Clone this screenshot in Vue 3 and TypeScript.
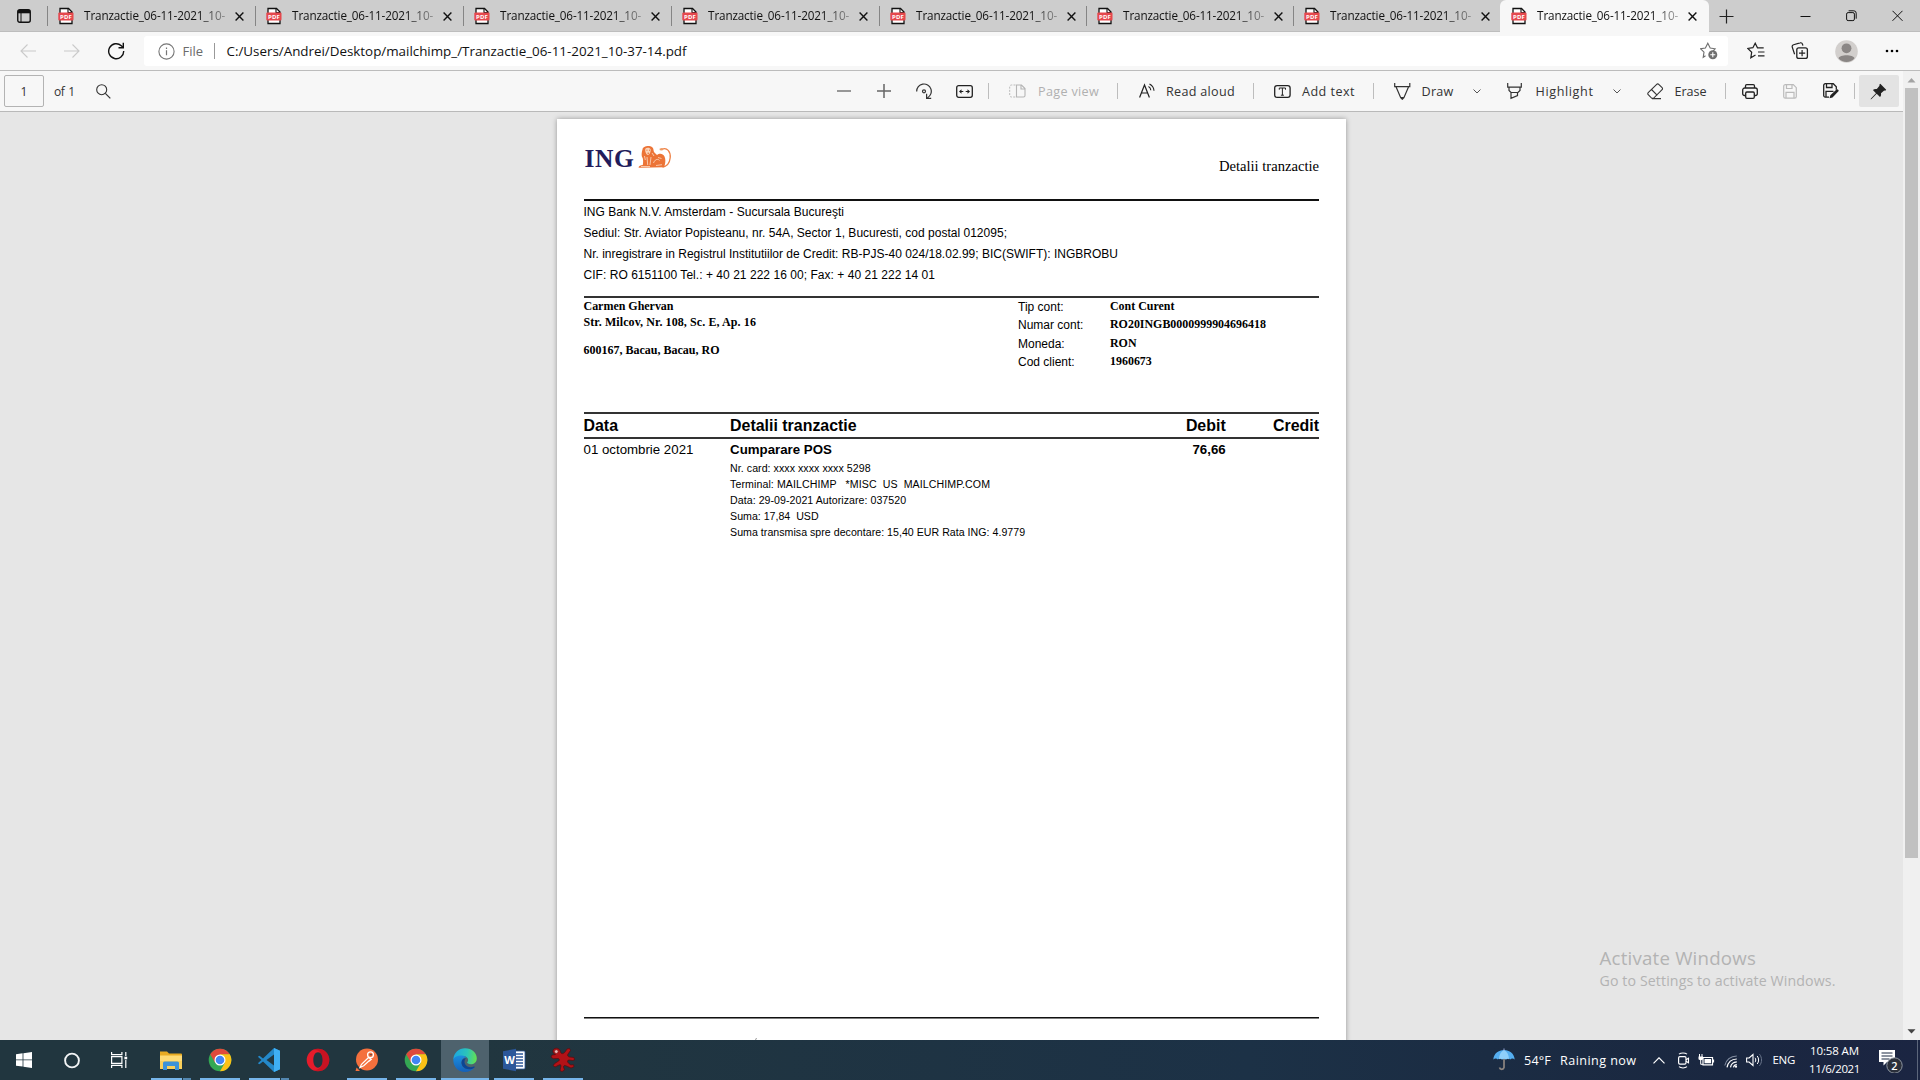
<script setup lang="ts">
import type { Directive } from 'vue'

interface Tab {
  title: string
  active: boolean
}

const tabs: Tab[] = Array.from({ length: 8 }, (_, i) => ({
  title: 'Tranzactie_06-11-2021_10-',
  active: i === 7,
}))

interface Line {
  text: string
  width: number
}

const bankLines: Line[] = [
  { text: 'ING Bank N.V. Amsterdam - Sucursala Bucureşti', width: 260.5 },
  { text: 'Sediul: Str. Aviator Popisteanu, nr. 54A, Sector 1, Bucuresti, cod postal 012095;', width: 423.5 },
  { text: 'Nr. inregistrare in Registrul Institutiilor de Credit: RB-PJS-40 024/18.02.99; BIC(SWIFT): INGBROBU', width: 534.5 },
  { text: 'CIF: RO 6151100 Tel.: + 40 21 222 16 00; Fax: + 40 21 222 14 01', width: 351.5 },
]

const account: [string, string][] = [
  ['Tip cont:', 'Cont Curent'],
  ['Numar cont:', 'RO20INGB0000999904696418'],
  ['Moneda:', 'RON'],
  ['Cod client:', '1960673'],
]

const details: Line[] = [
  { text: 'Nr. card: xxxx xxxx xxxx 5298', width: 140.5 },
  { text: 'Terminal: MAILCHIMP   *MISC  US  MAILCHIMP.COM', width: 260 },
  { text: 'Data: 29-09-2021 Autorizare: 037520', width: 176 },
  { text: 'Suma: 17,84  USD', width: 88.5 },
  { text: 'Suma transmisa spre decontare: 15,40 EUR Rata ING: 4.9779', width: 295 },
]

interface App {
  name: string
  running: boolean
  stacked?: boolean
  current?: boolean
}

const apps: App[] = [
  { name: 'explorer', running: true, stacked: true },
  { name: 'chrome', running: true },
  { name: 'code', running: true, stacked: true },
  { name: 'opera', running: false },
  { name: 'postman', running: true },
  { name: 'chrome', running: true },
  { name: 'edge', running: true, current: true },
  { name: 'word', running: true },
  { name: 'gecko', running: true },
]

// Spreads a label over the given number of pixels by adjusting its tracking.
const vFit: Directive<HTMLElement, number> = {
  mounted(el, { value }) {
    const natural = el.getBoundingClientRect().width
    const count = (el.textContent ?? '').length
    if (count > 0) el.style.letterSpacing = `${(value - natural) / count}px`
  },
}
</script>

<template>
  <div class="screen">
    <header class="strip">
      <div class="tab-menu">
        <svg width="14" height="14" viewBox="0 0 14 14"><rect x=".75" y=".75" width="12.5" height="12.5" rx="2" fill="none" stroke="#111" stroke-width="1.4" /><path d="M1 1h12v3.3H1z" fill="#111" /><path d="M4 4v9" stroke="#111" stroke-width="1" /></svg>
      </div>
      <div v-for="(t, i) in tabs" :key="i" class="tab" :class="{ active: t.active }">
        <svg class="pdf" width="16" height="18" viewBox="0 0 16 18">
          <path d="M2 1.500h8.500L14 5v11.500H2z" fill="#fff" stroke="#111" stroke-width="1.300" />
          <path d="M10 1.500V5.500h4" fill="none" stroke="#111" stroke-width="1.100" />
          <rect x=".3" y="5.500" width="15.200" height="8" rx="1" fill="#e5484d" />
          <text x="7.900" y="11.700" text-anchor="middle" textLength="12" font-family="Open Sans, sans-serif" font-weight="700" font-size="6" fill="#fff">PDF</text>
        </svg>
        <span class="title"><span v-fit="141">{{ t.title }}</span></span>
        <svg class="x" width="9" height="9" viewBox="0 0 9 9"><path d="M.6.6l7.800 7.800M8.400.6L.6 8.400" stroke="#111" stroke-width="1.400" /></svg>
      </div>
      <svg class="new-tab" width="15" height="15" viewBox="0 0 15 15"><path d="M7.500 .5v14M.5 7.500h14" stroke="#222" stroke-width="1.200" /></svg>
      <div class="window-controls">
        <svg width="11" height="12" viewBox="0 0 11 12"><path d="M.5 6.500h10" stroke="#111" /></svg>
        <svg width="11" height="12" viewBox="0 0 11 12"><rect x=".6" y="2.600" width="7.800" height="8" rx="1.500" fill="none" stroke="#111" /><path d="M2.600 .8h5.200a2.400 2.400 0 0 1 2.400 2.400v5.500" fill="none" stroke="#111" /></svg>
        <svg width="11" height="12" viewBox="0 0 11 12"><path d="M.5.8l10 10M10.500.8l-10 10" stroke="#111" /></svg>
      </div>
    </header>

    <div class="nav">
      <svg class="back" width="16" height="14" viewBox="0 0 16 14"><path d="M16 7H1M7.500.5L1 7l6.500 6.500" fill="none" stroke="#cacaca" stroke-width="1.100" /></svg>
      <svg class="forward" width="16" height="14" viewBox="0 0 16 14"><path d="M0 7h15M8.500.5L15 7l-6.500 6.500" fill="none" stroke="#cacaca" stroke-width="1.100" /></svg>
      <svg class="reload" width="18" height="18" viewBox="0 0 18 18"><path d="M16.700 9A7.500 7.500 0 1 1 14.300 3.700L16 5.300" fill="none" stroke="#111" stroke-width="1.400" /><path d="M16.300.8V5.700H11.500" fill="none" stroke="#111" stroke-width="1.400" /></svg>
      <div class="address">
        <svg class="info" width="17" height="17" viewBox="0 0 17 17"><circle cx="8.500" cy="8.500" r="7.600" fill="none" stroke="#767676" stroke-width="1.100" /><path d="M8.500 7.300v5M8.500 4.500v1.400" stroke="#767676" stroke-width="1.200" /></svg>
        <span class="file"><span v-fit="20.500">File</span></span>
        <i class="bar"></i>
        <span class="url"><span v-fit="460">C:/Users/Andrei/Desktop/mailchimp_/Tranzactie_06-11-2021_10-37-14.pdf</span></span>
        <svg class="add-star" width="18" height="18" viewBox="0 0 18 18"><path d="M5.500 13.800l-2.300 1.500.8-5.200L.7 6.800l4.700-.8L7.800 1.300 10.200 6l4.900.8-2 2" fill="none" stroke="#6e6e6e" stroke-width="1.100" /><circle cx="12.800" cy="12.800" r="4.500" fill="#6e6e6e" /><path d="M12.800 10.300v5M10.300 12.800h5" stroke="#fff" stroke-width="1.100" /></svg>
      </div>
      <svg class="favs" width="18" height="18" viewBox="0 0 18 18"><path d="M8.500 13L3.800 15.800l.9-5.600L.8 6.500l5.100-.8L8.200 1.200l2.300 4.600h6.200M11 10h6.500M11 13.800h6.500" fill="none" stroke="#222" stroke-width="1.200" /></svg>
      <svg class="collections" width="18" height="18" viewBox="0 0 18 18"><rect x="5.800" y="5.800" width="10.600" height="10.600" rx="2" fill="none" stroke="#222" stroke-width="1.300" /><path d="M11.100 8v6.200M8 11.100h6.200M3.600 12.300L1.300 5.200a2 2 0 0 1 1.300-2.500L9 .9a2 2 0 0 1 2.500 1.300l.4 1.400" fill="none" stroke="#222" stroke-width="1.200" /></svg>
      <svg class="avatar" width="23" height="23" viewBox="0 0 23 23"><circle cx="11.500" cy="11.500" r="11.300" fill="#d2cfcd" /><circle cx="11.500" cy="8.300" r="4.900" fill="#8a8685" /><path d="M3.500 18.300c1-4 15-4 16 0-4 5-12 5-16 0z" fill="#8a8685" /></svg>
      <svg class="dots" width="14" height="4" viewBox="0 0 14 4"><circle cx="2" cy="2" r="1.300" /><circle cx="7" cy="2" r="1.300" /><circle cx="12" cy="2" r="1.300" /></svg>
    </div>

    <main class="viewer">
      <div class="viewer-main">
        <div class="tools">
          <span class="page-no">1</span>
          <span class="of"><span v-fit="20.500">of 1</span></span>
          <svg class="search" width="15" height="15" viewBox="0 0 15 15"><circle cx="5.700" cy="5.700" r="5" fill="none" stroke="#333" stroke-width="1.100" /><path d="M9.300 9.300l5 5" stroke="#333" stroke-width="1.200" /></svg>
          <svg class="minus" width="14" height="14" viewBox="0 0 14 14"><path d="M0 7h14" stroke="#777" stroke-width="1.500" /></svg>
          <svg class="plus" width="14" height="14" viewBox="0 0 14 14"><path d="M0 7h14M7 0v14" stroke="#666" stroke-width="1.500" /></svg>
          <svg class="rotate" width="17" height="17" viewBox="0 0 17 17"><path d="M.7 8.500A7.300 7.300 0 1 1 11.500 14.700M10.600 10.800v4.600h4.600" fill="none" stroke="#333" stroke-width="1.200" /><circle cx="8" cy="8.300" r="1.500" fill="none" stroke="#333" stroke-width="1.200" /></svg>
          <svg class="fit" width="17" height="13" viewBox="0 0 17 13"><rect x=".7" y=".7" width="15.600" height="11.600" rx="2" fill="none" stroke="#222" stroke-width="1.300" /><path d="M3 6.500l2.500-2.200v1.600h1.800v1.200H5.500v1.600zM14 6.500l-2.500-2.200v1.600H9.700v1.200h1.800v1.600z" fill="#222" /></svg>
          <i class="div d1"></i>
          <svg class="pageview" width="17" height="14" viewBox="0 0 17 14"><path d="M6.500 1H2.500A1.800 1.800 0 0 0 .7 2.800v8.400A1.800 1.800 0 0 0 2.500 13h4" fill="none" stroke="#bbb" stroke-dasharray="2 1.200" /><path d="M7.500 1h5l3.500 3.500v7A1.500 1.500 0 0 1 14.500 13h-7zM12 1v4h4" fill="none" stroke="#b5b5b5" stroke-width="1.100" /></svg>
          <span class="lbl pv"><span v-fit="61">Page view</span></span>
          <i class="div d2"></i>
          <svg class="aloud" width="17" height="16" viewBox="0 0 17 16"><path d="M.6 14.500L5.500 2l4.900 12.500M2.400 10h6.200" fill="none" stroke="#222" stroke-width="1.200" /><path d="M9.500 3.500c1.500.8 2.200 2 2.300 3.700M10.500.9c2.800 1.400 4.300 3.600 4.500 6.800" fill="none" stroke="#222" stroke-width="1.100" /></svg>
          <span class="lbl ra"><span v-fit="69">Read aloud</span></span>
          <i class="div d3"></i>
          <svg class="addt" width="17" height="13" viewBox="0 0 17 13"><rect x=".7" y=".7" width="15.400" height="11.600" rx="2.400" fill="none" stroke="#222" stroke-width="1.300" /><path d="M5.300 4.700V3h6.200v1.700M8.400 3v7.200M6.900 10.200h3" fill="none" stroke="#222" stroke-width="1" /></svg>
          <span class="lbl at"><span v-fit="53">Add text</span></span>
          <i class="div d4"></i>
          <svg class="draw" width="17" height="17" viewBox="0 0 17 17"><path d="M.7 0v3.700h15.100V0M2 3.700l4.700 11h3.200l4.700-11M6.700 14.700l1.600 1.600 1.600-1.600" fill="none" stroke="#333" stroke-width="1.200" /></svg>
          <span class="lbl dr"><span v-fit="32">Draw</span></span>
          <svg class="chev" width="8" height="5" viewBox="0 0 8 5"><path d="M.5.500L4 4 7.500.5" fill="none" stroke="#555" /></svg>
          <svg class="high" width="15" height="17" viewBox="0 0 15 17"><path d="M.7 0v4.200h13.600V0M2 4.200v3.300l2 2h7l2-2V4.200M4 9.500v5.800l6.500-2.800v-3" fill="none" stroke="#333" stroke-width="1.200" /></svg>
          <span class="lbl hi"><span v-fit="58">Highlight</span></span>
          <svg class="chev c2" width="8" height="5" viewBox="0 0 8 5"><path d="M.5.500L4 4 7.500.5" fill="none" stroke="#555" /></svg>
          <svg class="erase" width="17" height="17" viewBox="0 0 17 17"><path d="M9.700 1.300a1.400 1.400 0 0 1 2 0l3.400 3.400a1.400 1.400 0 0 1 0 2L6.500 15.300H4.800L1.200 11.700a1.400 1.400 0 0 1 0-2zM4.500 6.500l5.800 5.800M5 15.600h9" fill="none" stroke="#333" stroke-width="1.100" /></svg>
          <span class="lbl er"><span v-fit="32">Erase</span></span>
          <i class="div d5"></i>
          <svg class="print" width="16" height="15" viewBox="0 0 16 15"><path d="M3.500 4V2A1.300 1.300 0 0 1 4.800.7h6.400A1.300 1.300 0 0 1 12.500 2v2M3.500 11.500h-1A1.800 1.800 0 0 1 .7 9.700V6A2 2 0 0 1 2.700 4h10.600a2 2 0 0 1 2 2v3.700a1.800 1.800 0 0 1-1.800 1.800h-1" fill="none" stroke="#222" stroke-width="1.300" /><rect x="3.700" y="8" width="8.600" height="6.300" rx="1.200" fill="#f7f7f7" stroke="#222" stroke-width="1.300" /></svg>
          <svg class="save" width="14" height="15" viewBox="0 0 14 15"><path d="M2 .7h8.300l3 3V12.500a1.600 1.600 0 0 1-1.600 1.600H2.300A1.600 1.600 0 0 1 .7 12.500V2.300A1.600 1.600 0 0 1 2.300.7M3.500.7v3.800h5.500V.7M3 14V8.300h8V14" fill="none" stroke="#bbb" stroke-width="1.200" /></svg>
          <svg class="saveas" width="16" height="16" viewBox="0 0 16 16"><path d="M6 14.100H2.300A1.600 1.600 0 0 1 .7 12.500V2.300A1.600 1.600 0 0 1 2.300.7h8l3 3v3M3.500.7v3.800H9V.7M3 14V8.300h7.500" fill="none" stroke="#222" stroke-width="1.300" /><path d="M13.200 6.700a1.300 1.300 0 0 1 2 1.900L9.500 14.400l-3 .9.900-3z" fill="#222" /></svg>
          <i class="div d6"></i>
          <span class="pin"><svg width="17" height="17" viewBox="0 0 17 17"><path d="M10.300.8l5.900 5.900-1 1-1-.2-3.200 2.700c.2 1.600 0 2.900-1 3.900L6.700 10.800 1.500 16 .5 16.500 1 15.500l5-5.300L2.900 7.100c1-1 2.300-1.200 3.900-1l2.700-3.300-.2-1z" fill="#222" /></svg></span>
        </div>

        <div class="canvas">
          <article class="page">
            <div class="letterhead">
              <div class="logo">
                <span v-fit="50">ING</span>
                <svg width="34" height="24" viewBox="0 0 34 24">
                  <path d="M24 4.200c5-2.200 8.800 2.400 8.200 8.600-.5 5-3.200 8.500-7.700 9.300" fill="none" stroke="#ee8146" stroke-width="1.300" />
                  <path d="M21.500 3.800l2-.8 2 .9-1.200 1.700-2.500-.4z" fill="#f09a62" />
                  <path d="M4.500 4.500C4.500.500 15.500-.8 15.500 5c0 2.500 1.800 3 3.500 5 2-1.700 5.800-2 7.500 1.500 1.500 3.200.8 8-.5 10.700L.8 22.800c-.8-1.500 1.500-2.300 4-2.800.5-2.500.4-4.500-.1-7-1.800-2.300-.9-6-.2-8.500z" fill="#ec7437" />
                  <path d="M7.300 3.800c1.500-1.700 4.900-1.200 5.400.8.200 2.200-.9 5-2.700 5.400-2-.4-3.200-3.800-2.700-6.200z" fill="#fbd5bb" />
                  <path d="M9 12l.7 8M13 12l-1 8M15.500 18c1-3 4-5 6-2.500M18 20.500l6-.8M14 8l2 3M6.500 11l.8 4M3 21.500h9M20 12.500l3.500 1" fill="none" stroke="#fbdcc6" stroke-width=".8" />
                  <path d="M8.500 5.200h.9M11 5.200h.9M9.500 8.200h1.500" stroke="#d95712" stroke-width=".9" />
                </svg>
              </div>
              <span class="doc-title">Detalii tranzactie</span>
            </div>
            <section class="bank">
              <p v-for="line in bankLines" :key="line.text"><span v-fit="line.width">{{ line.text }}</span></p>
            </section>
            <section class="customer">
              <div class="holder">
                <p><span v-fit="90">Carmen Ghervan</span></p>
                <p><span v-fit="172.500">Str. Milcov, Nr. 108, Sc. E, Ap. 16</span></p>
                <p class="city"><span v-fit="136">600167, Bacau, Bacau, RO</span></p>
              </div>
              <dl class="account">
                <div v-for="row in account" :key="row[0]"><dt>{{ row[0] }}</dt><dd>{{ row[1] }}</dd></div>
              </dl>
            </section>
            <section class="table">
              <div class="row head"><span>Data</span><span>Detalii tranzactie</span><span class="num">Debit</span><span class="num">Credit</span></div>
              <div class="row"><span>01 octombrie 2021</span><b>Cumparare POS</b><b class="num">76,66</b><span></span></div>
              <div class="lines"><p v-for="d in details" :key="d.text"><span v-fit="d.width">{{ d.text }}</span></p></div>
            </section>
            <footer class="foot">
              <svg width="4" height="4" viewBox="0 0 4 4"><path d="M1 4l1.500-3" stroke="#999" /></svg>
            </footer>
          </article>
          <aside class="watermark">
            <p class="w1"><span v-fit="156.500">Activate Windows</span></p>
            <p class="w2"><span v-fit="236">Go to Settings to activate Windows.</span></p>
          </aside>
        </div>
      </div>
      <div class="scroll">
        <svg width="9" height="5" viewBox="0 0 9 5"><path d="M4.500 0L8.500 4.500h-8z" fill="#a3a3a3" /></svg>
        <i class="thumb"></i>
        <svg class="down" width="9" height="5" viewBox="0 0 9 5"><path d="M4.500 4.500L8.500.300h-8z" fill="#444" /></svg>
      </div>
    </main>

    <footer class="taskbar">
      <div class="sys">
        <svg width="16" height="16" viewBox="0 0 16 16"><path d="M0 2.200L6.600 1.300V7.500H0zM7.400 1.200L16 0v7.500H7.400zM0 8.300h6.600v6.300L0 13.700zM7.400 8.300H16V16l-8.600-1.200z" fill="#fff" /></svg>
      </div>
      <div class="sys">
        <svg width="17" height="17" viewBox="0 0 17 17"><circle cx="8" cy="8.500" r="6.900" fill="none" stroke="#f2f4f5" stroke-width="1.900" /></svg>
      </div>
      <div class="sys">
        <svg width="17" height="16" viewBox="0 0 17 16"><path d="M.6 0v2.700h10.300V0M.6 16v-2.700h10.300V16M.6 4.700h10.300v6.600H.6zM14.800 0v4M14.800 8v8" fill="none" stroke="#fff" stroke-width="1.200" /><rect x="13.400" y="4.700" width="2.800" height="2.600" fill="#fff" /></svg>
      </div>
      <div class="apps">
        <div v-for="(a, i) in apps" :key="i" class="app" :class="{ running: a.running, stacked: a.stacked, current: a.current }">
          <svg v-if="a.name === 'explorer'" width="24" height="24" viewBox="0 0 24 24"><path d="M1 3.500h7l2 2h12a1 1 0 0 1 1 1V20a1 1 0 0 1-1 1H1z" fill="#e9ab22" /><path d="M1 7.500h22V20a1 1 0 0 1-1 1H2a1 1 0 0 1-1-1z" fill="#ffdb74" /><path d="M1 13h22v7a1 1 0 0 1-1 1H2a1 1 0 0 1-1-1z" fill="#f9cf5a" /><path d="M4 22v-7a1.500 1.500 0 0 1 1.500-1.500h13A1.500 1.500 0 0 1 20 15v7h-4v-4H8v4z" fill="#3c92d8" /></svg>
          <svg v-else-if="a.name === 'chrome'" width="24" height="24" viewBox="0 0 24 24"><circle cx="12" cy="12" r="11.300" fill="#34a853" /><path d="M2.200 6.350A11.300 11.300 0 0 1 21.800 6.350L12 6.400 7.100 14.800z" fill="#df4a3c" /><path d="M21.800 6.350A11.300 11.300 0 0 1 12 23.300l4.900-8.500L12 6.350z" fill="#fbc116" /><circle cx="12" cy="12" r="5.500" fill="#fff" /><circle cx="12" cy="12" r="4.300" fill="#4285f4" /></svg>
          <svg v-else-if="a.name === 'code'" width="24" height="24" viewBox="0 0 24 24"><path d="M17 0l6 2.700v18.600L17 24 6 13.500l-3.500 2.800L.8 15.300 4.500 12 .8 8.700l1.700-1L6 10.500z" fill="#2489ca" /><path d="M17 6.500L9.500 12l7.500 5.500z" fill="#223841" /><path d="M17 0l6 2.700v18.600L17 24z" fill="#3fb0f5" /></svg>
          <svg v-else-if="a.name === 'opera'" width="24" height="24" viewBox="0 0 24 24"><path fill-rule="evenodd" d="M12 .7a11.300 11.300 0 1 1 0 22.600A11.300 11.300 0 1 1 12 .7zM12 4.300c-2.900 0-4.700 3.500-4.700 7.700s1.800 7.700 4.700 7.700 4.700-3.500 4.700-7.700-1.800-7.700-4.700-7.700z" fill="#e51c2b" /><path d="M12 .7A11.300 11.300 0 0 1 12 23.300c-2 0-3.500-.6-4.500-1.500 6 1 9.200-4.500 9.200-9.800s-3.200-10.800-9.200-9.800C8.500 1.300 10 .7 12 .7z" fill="#b30d1c" opacity=".55" /></svg>
          <svg v-else-if="a.name === 'postman'" width="24" height="24" viewBox="0 0 24 24"><circle cx="12" cy="11.500" r="11" fill="#f4703d" /><path d="M.5 23l1-3.500L5 23z" fill="#f4703d" /><circle cx="15.500" cy="6.800" r="2.900" fill="#f4703d" stroke="#fff" stroke-width="1.300" /><path d="M13.500 9.500l-7 6.800L5 19.500l3.700-1.700 6.300-5.800M13.500 9.500l2.800 1.800-2.300 2" fill="none" stroke="#fff" stroke-width="1.200" /><path d="M14.700 6.800h2.400" stroke="#444" stroke-width="1" /></svg>
          <svg v-else-if="a.name === 'edge'" width="24" height="24" viewBox="0 0 24 24"><defs><linearGradient id="eg" x1="0" y1=".2" x2="1" y2=".3"><stop offset="0" stop-color="#1ba6e4" /><stop offset=".6" stop-color="#2cc5b8" /><stop offset="1" stop-color="#62df55" /></linearGradient><linearGradient id="eb" x1="0" y1="0" x2="0" y2="1"><stop offset="0" stop-color="#1b8fdf" /><stop offset="1" stop-color="#1560b8" /></linearGradient></defs><path d="M.3 11.500C.8 4.500 6 .2 12 .2c7 0 11.800 4.800 11.800 10 0 4-2.900 6-6 6-2.400 0-3.700-.8-3.700-1.600 0-.7 1-1 1-2.700 0-2-2-4-5-4C5 7.900.9 10 .3 11.500z" fill="url(#eg)" /><path d="M.3 11.500C1 9 4.500 7.200 9 7.500c2 .2 3.600 1 4.700 2-2.700-.6-5.200 1.500-5.200 5 0 4 3.500 6.700 7.500 6.700 2 0 3.700-.5 5.300-1.500C19.500 22.300 16 24 12 24 5 24 .1 18.500.3 11.500z" fill="url(#eb)" /><path d="M8.500 14.500c0 4 3.500 6.700 7.500 6.700 2 0 3.700-.5 5.300-1.500.6-.8.3-1.500-.5-1.100-5 2-9.300-1-9.300-4.800 0-1.500.6-2.700 1.500-3.600-2.500 0-4.500 1.500-4.500 4.300z" fill="#0d4594" /></svg>
          <svg v-else-if="a.name === 'word'" width="24" height="24" viewBox="0 0 24 24"><path d="M12 3h10a1 1 0 0 1 1 1v16a1 1 0 0 1-1 1H12z" fill="#fff" stroke="#2b579a" stroke-width=".8" /><path d="M14 6h7M14 9h7M14 12h7M14 15h7M14 18h7" stroke="#2b579a" stroke-width="1.300" /><path d="M1 3.200L14 .8v22.400L1 20.800z" fill="#2b579a" /><text x="7.500" y="16" text-anchor="middle" font-family="Open Sans, sans-serif" font-size="11" font-weight="700" fill="#fff">W</text></svg>
          <svg v-else width="26" height="26" viewBox="0 0 26 26"><path d="M4 2c3-2 6 0 6.500 3 .5 1.500 1.500 2 3 1.300 1.500-.8 2.500-2.800 3.500-4.300l2.500-.5 1 2-2.500 3.500c-1 1.500 0 2.500 1.500 3l4.500.5.5 2.500-2 .5-3.500-.5c-1.500 0-2 1.500-1 2.500l2.500 2.500 3-.3.500 2-3 1.300-4.500-2c-2-1-3-.5-3 1l1 3-2.500 1.500-2-1 1-4.500c0-1.500-1-1.500-2-1l-4 2-1.800-1.500 1.500-2 4-2.500c1-1 .8-2-.5-2.500l-5 .2L1 10l1-2 3.500-.5C3 6.500 2 4 4 2z" fill="#b31217" stroke="#5c0a0c" stroke-width=".7" /><circle cx="6.300" cy="4.600" r="1.900" fill="#e9b9b5" stroke="#7d1113" stroke-width=".7" /></svg>
        </div>
      </div>
      <div class="tray">
        <svg class="umb" width="22" height="24" viewBox="0 0 22 24"><path d="M11 9v10.500a2.300 2.300 0 0 1-4.500 0" fill="none" stroke="#8c8580" stroke-width="1.700" /><path d="M.3 11.500C.8 5.500 5.500 2 11 2s10.200 3.500 10.700 9.500c-1.500-1.300-3.300-1.300-4.500 0-1.200-1.300-3-1.300-4.200 0-1.200-1-2.800-1-4 0-1.200-1.300-3-1.300-4.200 0-1.200-1.300-3-1.300-4.500 0z" fill="#55aef0" /><path d="M11 2c-3.200 1.500-4.800 4.800-5 9.200 1-.8 2.200-.7 3 .3 1.200-1 2.800-1 4 0 .8-1 2-1.100 3-.3C15.800 6.800 14.200 3.500 11 2z" fill="#8fd0fb" /><path d="M11 .5v2" stroke="#9ad" /></svg>
        <span class="temp"><span v-fit="27">54°F</span></span>
        <span class="rain"><span v-fit="76.500">Raining now</span></span>
        <svg class="t1" width="12" height="7" viewBox="0 0 12 7"><path d="M.5 6.300L6 .8l5.500 5.500" fill="none" stroke="#fff" stroke-width="1.200" /></svg>
        <svg class="t2" width="13" height="17" viewBox="0 0 13 17"><rect x="1.600" y="4.700" width="7.400" height="7.400" rx="1.300" fill="none" stroke="#fff" stroke-width="1.200" /><path d="M9 7.700l2.500-1.500v4.500L9 9.200M2 2.200C4 .5 8 .5 10 2.200M2 14.700c2 1.700 6 1.700 8 0" fill="none" stroke="#fff" stroke-width="1.100" /></svg>
        <svg class="t3" width="17" height="13" viewBox="0 0 17 13"><path d="M5 3.500h9.500v7.300H5zM15.500 5.500v3" fill="none" stroke="#fff" stroke-width="1.200" /><path d="M6.500 5h6.500v4.300H6.500zM.5 2.500h4.500v2.500c0 1.500-4.500 1.500-4.500 0z" fill="#fff" /><path d="M1.500 0v3M4 0v3M2.700 5v5.300H5" fill="none" stroke="#fff" /></svg>
        <svg class="t4" width="14" height="13" viewBox="0 0 14 13"><path d="M.8 10.500C2 5 6.500 1 12.800 1" fill="none" stroke="#8590a3" stroke-width="1.100" /><path d="M3 12.300C4 7.500 7.500 4.200 12.800 4M6.500 12.300c.5-2.800 2.800-5.200 6.300-5.400M9.500 12.300c.3-1.300 1.500-2.700 3.300-2.700" fill="none" stroke="#fff" stroke-width="1.200" /><circle cx="12" cy="11.700" r="1.100" fill="#fff" /></svg>
        <svg class="t5" width="17" height="14" viewBox="0 0 17 14"><path d="M.6 5v4h2.500L7 12.500v-11L3.100 5z" fill="none" stroke="#fff" stroke-width="1.100" /><path d="M9 4.800c1 1.300 1 3.100 0 4.400M11.200 3c1.900 2.300 1.900 5.700 0 8" fill="none" stroke="#fff" /><path d="M13.500 1.200c2.700 3.300 2.700 8.300 0 11.600" fill="none" stroke="#68748a" /></svg>
        <span class="lang"><span v-fit="22.500">ENG</span></span>
        <div class="clock"><p><span v-fit="49">10:58 AM</span></p><p><span v-fit="51">11/6/2021</span></p></div>
        <svg class="note" width="25" height="25" viewBox="0 0 25 25"><path d="M1 2h16v12H9l-3.500 3.500V14H1z" fill="#fff" /><path d="M3.500 5h11M3.500 8h11M3.500 11h8" stroke="#1b2941" stroke-width="1.200" /><circle cx="16.500" cy="17.500" r="7.700" fill="#2b303b" stroke="#9aa1ab" stroke-width=".9" /><text x="16.500" y="21.500" text-anchor="middle" font-family="Open Sans, sans-serif" font-size="11" font-weight="600" fill="#fff">2</text></svg>
        <i class="peek"></i>
      </div>
    </footer>
  </div>
</template>

<style>
body { margin: 0; overflow: hidden; }
</style>

<style scoped>
.screen { width: 1920px; height: 1080px; display: flex; flex-direction: column; overflow: hidden; background: #e6e6e6; font-family: "Open Sans", "Noto Sans", sans-serif; color: #111; }
p, dl, dd, dt { margin: 0; }
svg { display: block; flex: none; }
span { white-space: pre; }

.strip { height: 32px; flex: none; display: flex; align-items: center; background: #cdcdcd; box-shadow: inset 0 -1px #bdbdbd; }
.tab-menu { width: 47.300px; box-sizing: border-box; padding-left: 17px; }
.tab { width: 207px; height: 32px; flex: none; box-sizing: border-box; display: flex; align-items: center; padding-left: 10.500px; font-size: 11.700px; background: linear-gradient(#858585, #858585) 0 50% / 1px 20px no-repeat; }
.tab:nth-child(-n + 5) { width: 208px; }
.tab.active { background: #f7f7f7; border-radius: 6px 6px 0 0; width: 208.500px; }
.title { width: 145px; margin-left: 10.300px; line-height: 30px; height: 32px; -webkit-mask-image: linear-gradient(90deg, #000 115px, rgba(0, 0, 0, .3) 142px); mask-image: linear-gradient(90deg, #000 115px, rgba(0, 0, 0, .3) 142px); }
.pdf { margin-top: -1px; }
.x { margin-left: 5.500px; }
.new-tab { margin-left: 10px; }
.window-controls { margin-left: auto; padding-right: 17px; display: flex; gap: 35px; }

.nav { height: 38px; flex: none; display: flex; align-items: center; background: #f7f7f7; border-bottom: 1px solid #bcbcbc; }
.back { margin-left: 20px; }
.forward { margin-left: 28px; }
.reload { margin-left: 27px; }
.address { width: 1584px; height: 30px; margin-left: 19px; display: flex; align-items: center; background: #fff; border-radius: 3px; font-size: 13.400px; line-height: 28px; }
.info { margin-left: 13.500px; }
.file { width: 24px; margin-left: 8px; color: #6b6b6b; font-size: 13px; }
.bar { width: 1px; height: 16px; margin-left: 7.500px; background: #999; }
.url { width: 470px; margin-left: 11.500px; }
.add-star { margin-left: auto; margin-right: 10px; }
.favs { margin-left: 19px; }
.collections { margin-left: 26px; }
.avatar { margin-left: 26px; }
.dots { margin-left: 27px; }

.viewer { flex: 1; min-height: 0; display: flex; }
.viewer-main { width: 1903px; display: flex; flex-direction: column; }
.tools { height: 40px; flex: none; display: flex; align-items: center; background: #f7f7f7; border-bottom: 1px solid #b9b9b9; font-size: 12.600px; line-height: 20px; color: #333; }
.page-no { width: 38px; height: 30px; line-height: 31px; margin-left: 4px; text-align: center; border: 1px solid #b3b3b3; border-radius: 2px; font-size: 12px; }
.of { width: 22px; margin-left: 10px; font-size: 12px; word-spacing: 1.500px; padding-top: 1px; }
.search { margin-left: 20px; }
.minus { margin-left: 726px; }
.plus { margin-left: 26px; }
.rotate { margin-left: 25px; }
.fit { margin-left: 22.500px; }
.div { width: 1px; height: 16px; background: #bdbdbd; flex: none; }
.d1 { margin-left: 15.500px; }
.pageview { margin-left: 20px; }
.lbl { flex: none; padding-top: 1px; }
.pv { width: 61px; margin-left: 12px; color: #b0b0b0; }
.d2 { margin-left: 18px; }
.aloud { margin-left: 21px; }
.ra { width: 69px; margin-left: 10px; }
.d3 { margin-left: 18px; }
.addt { margin-left: 20px; }
.at { width: 53px; margin-left: 11px; }
.d4 { margin-left: 18px; }
.draw { margin-left: 20px; }
.dr { width: 32px; margin-left: 10.500px; }
.chev { margin-left: 19px; }
.high { margin-left: 26.500px; }
.hi { width: 58px; margin-left: 13.500px; }
.c2 { margin-left: 19px; }
.erase { margin-left: 26px; }
.er { width: 32px; margin-left: 11px; }
.d5 { margin-left: 18px; }
.print { margin-left: 16px; }
.save { margin-left: 25px; }
.saveas { margin-left: 26px; }
.d6 { margin-left: 15px; }
.pin { width: 40px; height: 32px; margin-left: 4px; display: flex; align-items: center; justify-content: center; background: #e3e3e3; border-radius: 2px; }

.canvas { position: relative; flex: 1; min-height: 0; padding: 7px 0 0 557px; overflow: hidden; }
.page { width: 789px; height: 1117px; box-sizing: border-box; padding: 0 27px 0 26.500px; background: #fff; box-shadow: 0 0 5px rgba(0, 0, 0, .35); font-family: "Liberation Sans", Arial, sans-serif; color: #000; }
.letterhead { height: 80px; display: flex; justify-content: space-between; border-bottom: 2px solid #111; }
.logo { display: flex; align-items: flex-start; padding: 26px 0 0 1px; font: bold 25.500px/28px "Liberation Serif", serif; color: #221c5c; }
.logo svg { margin-left: 3px; }
.doc-title { font: 14.600px/20px "Liberation Serif", serif; padding-top: 37px; }
.bank { height: 94px; padding-top: 1px; font-size: 12px; line-height: 21px; border-bottom: 2px solid #333; }
.customer { height: 114px; display: flex; justify-content: space-between; font-size: 12px; border-bottom: 2px solid #333; }
.holder { font: bold 12px/16px "Liberation Serif", serif; }
.city { margin-top: 12px; }
.account { width: 301px; margin-top: -.5px; }
.account div { display: flex; height: 18.600px; line-height: 19px; }
.account dt { width: 92px; }
.account dd { font: bold 11.950px/17.500px "Liberation Serif", serif; }
.row { display: grid; grid-template-columns: 146.600px 395.600px 100px 93.300px; font-size: 13.280px; line-height: 21px; }
.head { font-size: 15.930px; font-weight: bold; line-height: 23px; height: 23px; border-bottom: 2px solid #333; }
.num { text-align: right; }
.lines { margin-left: 146.600px; font-size: 10.620px; line-height: 16px; }
.foot { margin-top: 477px; border-top: 1px solid #111; box-shadow: inset 0 1px #808080; padding: 19px 0 0 170px; }

.watermark { position: absolute; left: 1599.500px; top: 834px; color: #b3b3b3; }
.w1 { font-size: 18.700px; line-height: 24px; }
.w2 { font-size: 14.200px; line-height: 20px; margin-top: 1px; }

.scroll { width: 17px; display: flex; flex-direction: column; align-items: center; padding: 7px 0 6px; box-sizing: border-box; background: #f0f0f0; }
.thumb { width: 13px; height: 770px; margin-top: 5px; background: #c1c1c1; }
.down { margin-top: auto; }

.taskbar { height: 40px; flex: none; display: flex; align-items: center; background: linear-gradient(90deg, #21363f 0, #21363f 25%, #1c3146 65%, #1a2740 90%, #1b2542 100%); color: #fff; }
.sys { width: 48px; display: flex; justify-content: center; }
.sys:nth-child(3) { width: 47px; }
.apps { margin-left: 4px; display: flex; gap: 1px; }
.app { position: relative; width: 48px; height: 40px; display: flex; align-items: center; justify-content: center; }
.running::after { content: ""; position: absolute; left: 4px; right: 4px; bottom: 0; height: 2px; background: #76b5ea; }
.stacked::after { background: linear-gradient(90deg, #76b5ea 31px, #1f3540 31px, #1f3540 32px, #5387b0 32px); }
.current { background: #4e626d; }
.current::after { left: 0; right: 0; }
.tray { flex: 1; height: 40px; display: flex; align-items: center; font-size: 12.600px; line-height: 18px; }
.umb { margin-left: 906px; }
.temp { width: 28px; margin-left: 9px; padding-top: 1px; }
.rain { width: 77px; margin-left: 8px; padding-top: 1px; }
.t1 { margin-left: 15.500px; }
.t2 { margin-left: 12px; }
.t3 { margin-left: 8px; }
.t4 { margin-left: 9.500px; margin-top: 3px; }
.t5 { margin-left: 8px; }
.lang { width: 23px; margin-left: 9.500px; font-size: 11.500px; margin-top: -1px; }
.clock { width: 52px; margin-left: 13px; font-size: 11.500px; text-align: center; line-height: 18px; margin-top: -1px; }
.note { margin-left: 17px; }
.peek { width: 1px; height: 40px; margin-left: 14px; background: #5c667b; }
</style>
